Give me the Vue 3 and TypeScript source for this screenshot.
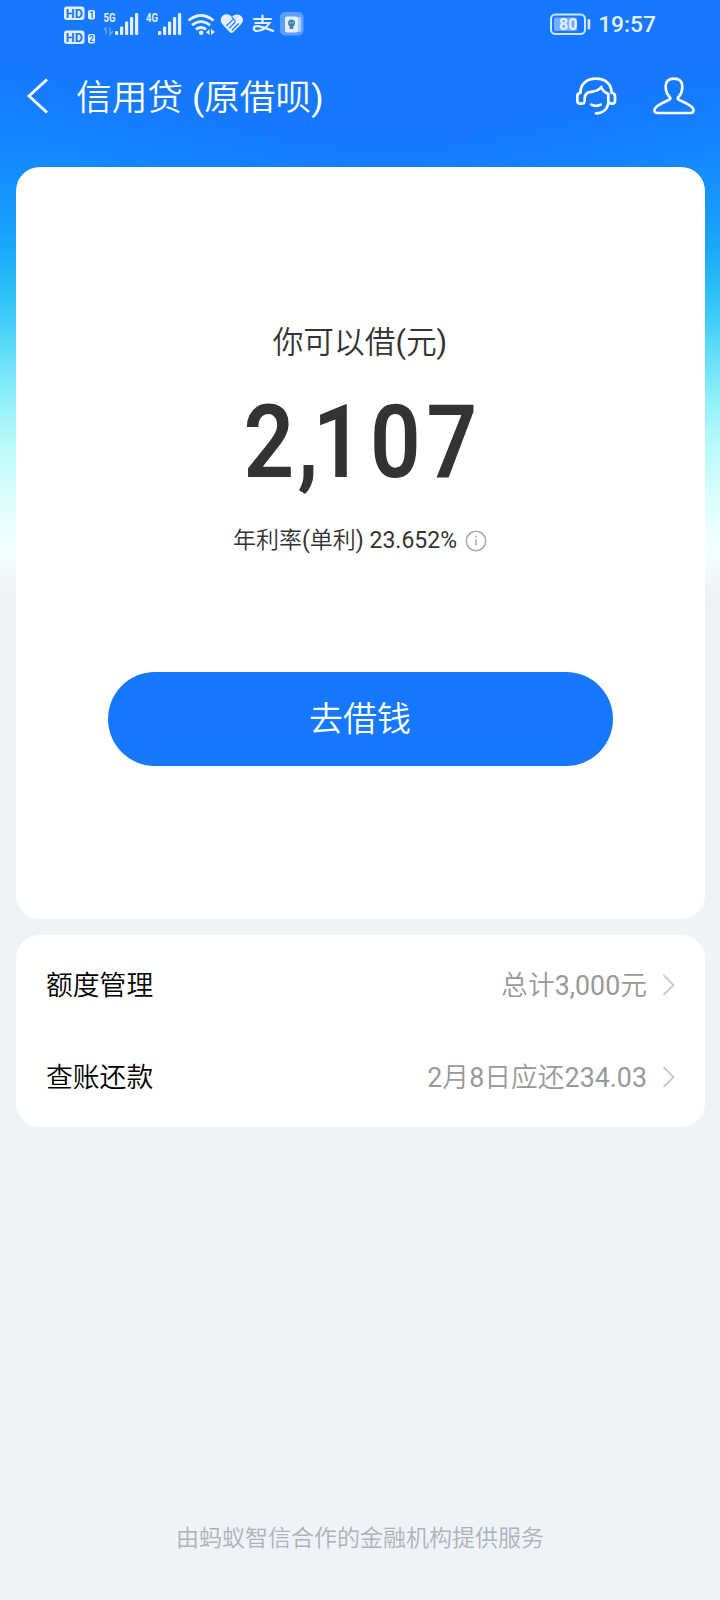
<script setup lang="ts">
interface Entry {
  label: string
  value: string
}

const entries: Entry[] = [
  { label: '额度管理', value: '总计3,000元' },
  { label: '查账还款', value: '2月8日应还234.03' },
]
</script>

<template>
  <main class="screen">
    <header class="status">
      <svg class="signals" width="250" height="48" viewBox="0 0 250 48" fill="#e4f0ff">
        <g class="hd">
          <rect x="1" y="6.5" width="20.5" height="13.5" rx="3" />
          <rect x="25" y="10" width="7" height="9.5" rx="2" />
          <rect x="1" y="30.5" width="20.5" height="13.5" rx="3" />
          <rect x="25" y="34" width="7" height="9.5" rx="2" />
          <g fill="#1677ff">
            <text x="2.8" y="18" font-size="13.5" textLength="17" lengthAdjust="spacingAndGlyphs">HD</text>
            <text x="26.3" y="18" font-size="8.5">1</text>
            <text x="2.8" y="42" font-size="13.5" textLength="17" lengthAdjust="spacingAndGlyphs">HD</text>
            <text x="26.1" y="42" font-size="8.5">2</text>
          </g>
        </g>
        <text class="net" x="40.5" y="22.3" textLength="12" lengthAdjust="spacingAndGlyphs">5G</text>
        <text class="net" x="83" y="22.3" textLength="12" lengthAdjust="spacingAndGlyphs">4G</text>
        <path d="M43 27.5v7m-2-4.5 2-2.5m4 0v7l3-3.5" fill="none" stroke="#68a4ff" stroke-width="1.4" />
        <g>
          <rect x="52" y="31" width="3.2" height="4" rx="1" />
          <rect x="57" y="26.5" width="3.2" height="8.5" rx="1" />
          <rect x="62" y="21.5" width="3.2" height="13.5" rx="1" />
          <rect x="67" y="17" width="3.2" height="18" rx="1" />
          <rect x="72" y="13" width="3.2" height="22" rx="1" />
        </g>
        <g>
          <rect x="95" y="31" width="3.2" height="4" rx="1" />
          <rect x="100" y="26.5" width="3.2" height="8.5" rx="1" />
          <rect x="105" y="21.5" width="3.2" height="13.5" rx="1" />
          <rect x="110" y="17" width="3.2" height="18" rx="1" />
          <rect x="115" y="13" width="3.2" height="22" rx="1" />
        </g>
        <g fill="none" stroke="#e4f0ff" stroke-width="2.8">
          <path d="M125.5 20.5q12.5-10 25 0" />
          <path d="M129 25.2q9-7.2 18 0" />
          <path d="M132.8 29.5q5.2-4 10.4 0" />
        </g>
        <circle cx="138.2" cy="32.8" r="2.3" />
        <path d="m143 32.5 3.5-3.5v6zm5-3.5 4 3-4 3z" />
        <path d="M168.7 16.8c-3-3.2-7.5-3.2-9.7-.2-2.4 3.3-1 6.4 1.4 8.8l6.4 6.8q1.7 1.6 3.4 0l7.2-7.2c2.8-2.8 3.4-5.7 1.2-8.4-2.4-2.8-6.5-2.8-9.9.2Z" />
        <path d="m163.3 26 6-5.8q1.6-1.3 2.6.1q.8 1.3-.6 2.7l-5.2 5.4" fill="none" stroke="#1677ff" stroke-width="1.1" />
        <path d="m168.7 16.8 2.2 2.3M168.8 30.5l6.9-7" fill="none" stroke="#1677ff" stroke-width="1.2" />
        <g fill="none" stroke="#e4f0ff" stroke-width="2.2" stroke-linecap="round">
          <path d="M191 19h17M199.5 15.5v7M192.5 23h14Q201.5 30.5 194.5 31c-5.5 0-4.5-5.2 0-4.9 5 .4 9 2.5 15.5 4.8" />
        </g>
        <rect x="217" y="12" width="23.5" height="23.5" rx="5" fill="#5d9ff8" />
        <rect x="235" y="17" width="3.2" height="15" rx="1" fill="#aacffb" />
        <rect x="222" y="16.5" width="13" height="16" rx="2" />
        <circle cx="228.5" cy="23" r="3.5" fill="#477fae" />
        <rect x="226.7" y="26" width="3.6" height="3" fill="#477fae" />
        <path d="M226.7 22.8h.8m2 0h.8" stroke="#fff" stroke-width="1.2" />
      </svg>
      <div class="power">
        <svg width="42" height="24" viewBox="0 0 42 24">
          <rect x="1" y="2.5" width="34" height="19.5" rx="4.5" fill="none" stroke="#d2e5ff" stroke-width="2" />
          <rect x="4" y="5.5" width="23" height="13.5" rx="1.5" fill="#75adff" />
          <rect x="37.5" y="7" width="2.8" height="10.5" rx="1.2" fill="#d2e5ff" />
          <text x="18.2" y="18" class="level">80</text>
        </svg>
        <time>19:57</time>
      </div>
    </header>

    <nav class="navbar">
      <svg class="back" width="24" height="38" viewBox="0 0 24 38">
        <path d="M21 2.5 3 19l18 16.5" fill="none" stroke="#fff" stroke-width="2.8" />
      </svg>
      <h1>信用贷 (原借呗)</h1>
      <svg class="service" width="44" height="42" viewBox="42 44 132 126">
        <g fill="none" stroke="#fff" stroke-width="8" stroke-linecap="round" stroke-linejoin="round">
          <path d="M61 97C62 70 81 55 108 55s46 15 47 42" />
          <path d="M72 128q-3 2-8 2h-3q-9 0-9-9v-13q0-9 9-11" />
          <path d="M74 122v-8C74 100 84 95 97 94q18-2 27-14c2 9 9 15 21 21v20q0 9 11 9 9 0 9-9v-13q0-9-10-11" />
          <path d="M145 128c-3 19-17 31-37 31M94 133q14 7 28 0" />
        </g>
      </svg>
      <svg class="person" width="44" height="42" viewBox="276 44 132 126">
        <path d="M329 110c-10-9-12-23-12-33 0-14 10-22 25-22s25 8 25 22c0 10-2 24-12 33q-4 5 1 8c14 8 34 14 42 25 6 9 2 15-7 15h-98c-9 0-13-6-7-15 8-11 28-17 42-25q5-3 1-8Z" fill="none" stroke="#fff" stroke-width="8" stroke-linejoin="round" />
      </svg>
    </nav>

    <section class="card quota">
      <h2>你可以借(元)</h2>
      <svg class="amount" width="240" height="130" viewBox="0 0 240 130">
        <text transform="scale(.87 1)" x="4 66 83.5 149.5 214.5" y="97">2,107</text>
      </svg>
      <p class="rate">
        年利率(单利) 23.652%
        <svg width="22" height="22" viewBox="0 0 22 22">
          <circle cx="11" cy="11" r="9.7" fill="none" stroke="#aaa" stroke-width="1.5" />
          <path d="M11 9.3v6.3M11 5.7v1.8" stroke="#aaa" stroke-width="1.5" />
        </svg>
      </p>
      <button type="button">去借钱</button>
    </section>

    <section class="card list">
      <div v-for="entry in entries" :key="entry.label" class="row">
        <span>{{ entry.label }}</span>
        <span class="value">{{ entry.value }}</span>
        <svg width="14" height="24" viewBox="0 0 14 24">
          <path d="M1.5 2 11.5 12l-10 10" fill="none" stroke="#c9c9c9" stroke-width="1.8" />
        </svg>
      </div>
    </section>

    <footer>由蚂蚁智信合作的金融机构提供服务</footer>
  </main>
</template>

<style>
body {
  margin: 0;
  background: #eff3f8;
}
</style>

<style scoped>
.screen {
  box-sizing: border-box;
  width: 720px;
  height: 1600px;
  display: flex;
  flex-direction: column;
  font-family: Roboto, "Noto Sans CJK SC DemiLight", "Noto Sans CJK SC", sans-serif;
  font-weight: 400;
  background:
    radial-gradient(ellipse 430px 240px at 390px 0, #1677ff 55%, #1677ff00 100%) no-repeat 0 0 / 720px 240px,
    linear-gradient(#1677ff 0, #1677ff 60px, #138aff 160px, #1699fd 210px, #1aaafa 250px, #30c2f8 300px, #5edcf8 350px, #91f0f9 400px, #bcfafa 450px, #dcfefd 500px, #f3ffff 550px, #f2f8fc 570px, #edf2f7 600px, #eff3f8 640px);
}
.status {
  height: 48px;
  padding: 0 64px 0 63px;
  display: flex;
  justify-content: space-between;
}
.hd text {
  font-weight: 700;
}
.net {
  font-size: 12.5px;
  font-weight: 700;
}
.power {
  display: flex;
  align-items: center;
  gap: 6px;
  color: #e6f1ff;
}
.level {
  font-size: 16px;
  font-weight: 700;
  text-anchor: middle;
  fill: #e6f1ff;
}
time {
  font-size: 22.8px;
  font-weight: 500;
  line-height: 48px;
  padding-top: 2px;
}
.navbar {
  height: 96px;
  margin-bottom: 23px;
  padding: 0 24px 0 26px;
  display: flex;
  align-items: center;
  color: #fff;
}
h1 {
  margin: 0 auto 0 26px;
  padding-top: 3px;
  font-size: 35.7px;
  line-height: 52px;
  font-weight: 400;
}
.person {
  margin-left: 34px;
}
.card {
  box-sizing: border-box;
  margin: 0 15.5px;
  border-radius: 24px;
  background: #fff;
}
.quota {
  height: 752px;
  padding-top: 153px;
  display: flex;
  flex-direction: column;
  align-items: center;
  color: #333;
}
h2 {
  margin: 0;
  font-size: 30.7px;
  line-height: 46px;
  font-weight: 400;
}
.amount {
  flex: none;
  margin-top: 14px;
  overflow: visible;
}
.amount text {
  font-size: 102px;
  font-weight: 600;
  fill: #333;
}
.rate {
  display: flex;
  align-items: center;
  gap: 8px;
  margin: 14px 0 0;
  font-size: 23px;
  line-height: 34px;
}
button {
  width: 505px;
  height: 94px;
  margin-top: 114px;
  padding: 0;
  border: 0;
  border-radius: 47px;
  background: #1677ff;
  color: #fff;
  font-family: inherit;
  font-size: 34px;
  line-height: 94px;
}
.list {
  height: 192px;
  margin-top: 16px;
  padding: 4px 28.5px 4px 30.5px;
}
.row {
  height: 92px;
  display: flex;
  align-items: center;
  font-size: 26.8px;
  color: #000;
}
.row span {
  padding-bottom: 4px;
}
.row .value {
  margin: 0 15px 0 auto;
  color: #999;
}
footer {
  margin: auto 0 41px;
  text-align: center;
  font-size: 23px;
  line-height: 40px;
  color: #aeb1b5;
}
</style>
